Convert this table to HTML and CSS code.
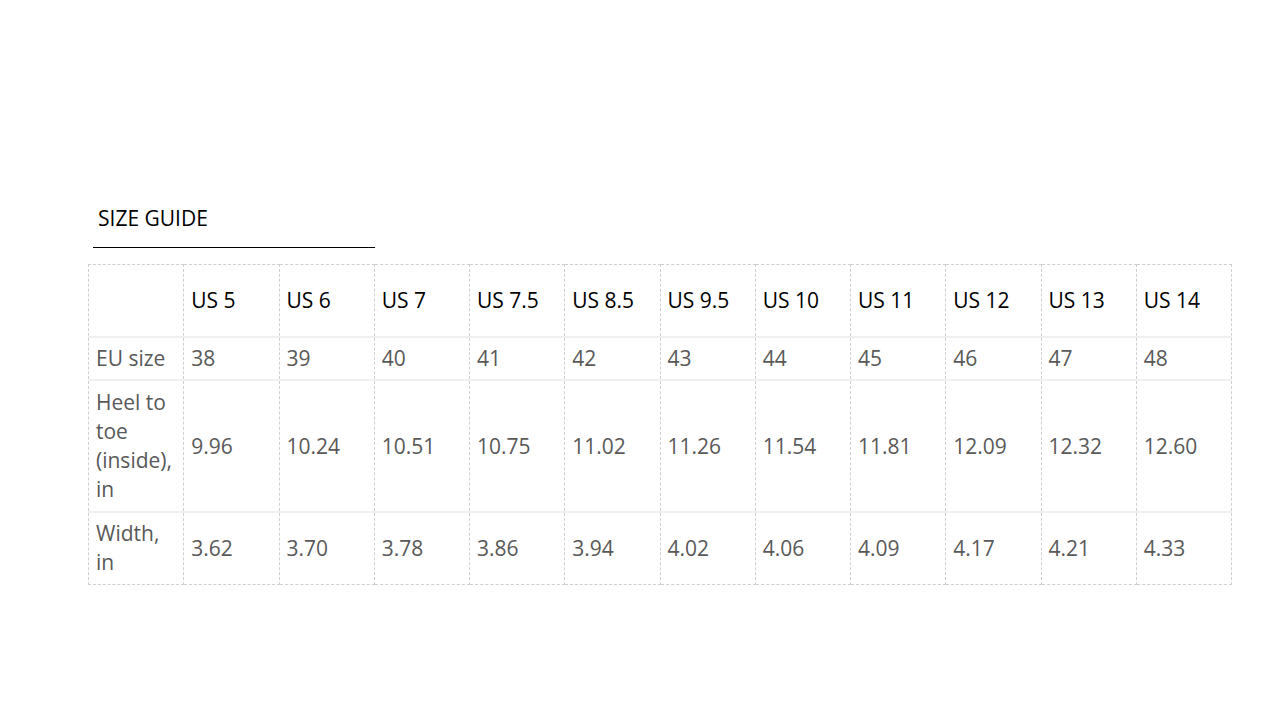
FILE: index.html
```html
<!DOCTYPE html>
<html lang="en">
<head>
<meta charset="utf-8">
<title>Size guide</title>
<link rel="stylesheet" href="styles.css">
</head>
<body>
<main class="page">
  <div class="title">SIZE GUIDE</div>
  <table class="sizes">
    <colgroup>
      <col><col><col><col><col><col><col><col><col><col><col><col>
    </colgroup>
    <tr class="head">
      <td></td><td>US 5</td><td>US 6</td><td>US 7</td><td>US 7.5</td><td>US 8.5</td><td>US 9.5</td><td>US 10</td><td>US 11</td><td>US 12</td><td>US 13</td><td>US 14</td>
    </tr>
    <tr>
      <td>EU size</td><td>38</td><td>39</td><td>40</td><td>41</td><td>42</td><td>43</td><td>44</td><td>45</td><td>46</td><td>47</td><td>48</td>
    </tr>
    <tr class="tall">
      <td>Heel to toe (inside), in</td><td>9.96</td><td>10.24</td><td>10.51</td><td>10.75</td><td>11.02</td><td>11.26</td><td>11.54</td><td>11.81</td><td>12.09</td><td>12.32</td><td>12.60</td>
    </tr>
    <tr class="last">
      <td>Width, in</td><td>3.62</td><td>3.70</td><td>3.78</td><td>3.86</td><td>3.94</td><td>4.02</td><td>4.06</td><td>4.09</td><td>4.17</td><td>4.21</td><td>4.33</td>
    </tr>
  </table>
</main>
</body>
</html>
```

FILE: styles.css
```css
html, body {
  margin: 0;
  padding: 0;
  background: #ffffff;
}

body {
  font-family: "Open Sans", "Noto Sans", "DejaVu Sans", sans-serif;
  font-size: 21px;
  line-height: 29px;
  color: #595959;
}

.page {
  padding: 204px 0 0 88px;
}

.title {
  color: #000000;
  margin-left: 5px;
  width: 277px;
  padding: 0 0 14px 5px;
  border-bottom: 1px solid #000000;
}

.sizes {
  margin-top: 16px;
  width: 1144px;
  table-layout: fixed;
  border-collapse: collapse;
}

.sizes td {
  padding: 6px 6px 6px 7px;
  vertical-align: middle;
  text-align: left;
  border-left: 1px dashed #cfcfcf;
  border-right: 1px dashed #cfcfcf;
  border-top: 2px solid #f0f0f0;
}

.sizes .head td {
  color: #000000;
  height: 59px;
  border-top: 1px dashed #cfcfcf;
}

.sizes .tall td {
  padding-top: 7px;
  padding-bottom: 7px;
}

.sizes .last td {
  padding-bottom: 7px;
  border-bottom: 1px dashed #cfcfcf;
}
```
